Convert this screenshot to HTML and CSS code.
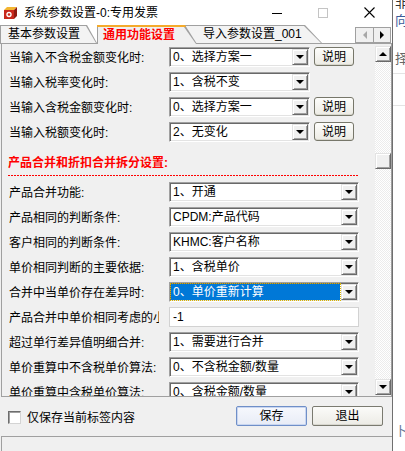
FILE: index.html
```html
<!DOCTYPE html>
<html lang="zh-CN">
<head>
    <meta charset="UTF-8">
    <meta name="viewport" content="width=device-width, initial-scale=1.0">
    <title>系统参数设置</title>
    <link rel="stylesheet" href="styles.css">
</head>
<body>
    <div class="screen">
        <div class="window">
            <div class="titlebar">
                <svg class="app-icon" width="15" height="15" viewBox="0 0 15 15">
                    <path d="M1 5 L11 5 L11 14 L1 14 Z" fill="#c8281c"/>
                    <path d="M1 5 L4 2 L14 2 L11 5 Z" fill="#f3b531"/>
                    <path d="M11 5 L14 2 L14 11 L11 14 Z" fill="#8e1a12"/>
                    <circle cx="6" cy="9.5" r="2.7" fill="#fff"/>
                    <circle cx="6" cy="9.5" r="1.3" fill="#c8281c"/>
                </svg>
                <span class="title">系统参数设置-0:专用发票</span>
                <div class="caption-buttons">
                    <span class="cap">
                        <svg width="10" height="10" viewBox="0 0 10 10"><path d="M0 5.5 H10" stroke="#000" stroke-width="1"/></svg>
                    </span>
                    <span class="cap">
                        <svg width="10" height="10" viewBox="0 0 10 10"><rect x="0.5" y="0.5" width="9" height="9" fill="none" stroke="#c4c4c4"/></svg>
                    </span>
                    <span class="cap">
                        <svg width="11" height="11" viewBox="0 0 11 11"><path d="M0.5 0.5 L10.5 10.5 M10.5 0.5 L0.5 10.5" stroke="#000" stroke-width="1.1"/></svg>
                    </span>
                </div>
            </div>

            <div class="tabstrip">
                <div class="tab tab-first">基本参数设置</div>
                <div class="tab tab-active">通用功能设置</div>
                <div class="tab tab-last">导入参数设置_001</div>
                <div class="tab-scroll">
                    <span class="ts-btn"><i class="arrow-left"></i></span>
                    <span class="ts-btn"><i class="arrow-right"></i></span>
                </div>
            </div>

            <div class="panel">
                <div class="form">
                    <div class="row">
                        <span class="label">当输入不含税金额变化时:</span>
                        <div class="combo combo-short"><span class="combo-value">0、选择方案一</span><span class="combo-btn"></span></div>
                        <button class="btn-help">说明</button>
                    </div>
                    <div class="row">
                        <span class="label">当输入税率变化时:</span>
                        <div class="combo combo-short"><span class="combo-value">1、含税不变</span><span class="combo-btn"></span></div>
                    </div>
                    <div class="row">
                        <span class="label">当输入含税金额变化时:</span>
                        <div class="combo combo-short"><span class="combo-value">0、选择方案一</span><span class="combo-btn"></span></div>
                        <button class="btn-help">说明</button>
                    </div>
                    <div class="row">
                        <span class="label">当输入税额变化时:</span>
                        <div class="combo combo-short"><span class="combo-value">2、无变化</span><span class="combo-btn"></span></div>
                        <button class="btn-help">说明</button>
                    </div>

                    <div class="section-title">产品合并和折扣合并拆分设置:</div>
                    <div class="dashline"></div>

                    <div class="row">
                        <span class="label">产品合并功能:</span>
                        <div class="combo combo-wide"><span class="combo-value">1、开通</span><span class="combo-btn"></span></div>
                    </div>
                    <div class="row">
                        <span class="label">产品相同的判断条件:</span>
                        <div class="combo combo-wide"><span class="combo-value">CPDM:产品代码</span><span class="combo-btn"></span></div>
                    </div>
                    <div class="row">
                        <span class="label">客户相同的判断条件:</span>
                        <div class="combo combo-wide"><span class="combo-value">KHMC:客户名称</span><span class="combo-btn"></span></div>
                    </div>
                    <div class="row">
                        <span class="label">单价相同判断的主要依据:</span>
                        <div class="combo combo-wide"><span class="combo-value">1、含税单价</span><span class="combo-btn"></span></div>
                    </div>
                    <div class="row">
                        <span class="label">合并中当单价存在差异时:</span>
                        <div class="combo combo-wide"><span class="combo-value selected">0、单价重新计算</span><span class="combo-btn"></span></div>
                    </div>
                    <div class="row">
                        <span class="label">产品合并中单价相同考虑的小数位数:</span>
                        <div class="edit">-1</div>
                    </div>
                    <div class="row">
                        <span class="label">超过单行差异值明细合并:</span>
                        <div class="combo combo-wide"><span class="combo-value">1、需要进行合并</span><span class="combo-btn"></span></div>
                    </div>
                    <div class="row">
                        <span class="label">单价重算中不含税单价算法:</span>
                        <div class="combo combo-wide"><span class="combo-value">0、不含税金额/数量</span><span class="combo-btn"></span></div>
                    </div>
                    <div class="row">
                        <span class="label">单价重算中含税单价算法:</span>
                        <div class="combo combo-wide"><span class="combo-value">0、含税金额/数量</span><span class="combo-btn"></span></div>
                    </div>
                </div>

                <div class="vscroll">
                    <span class="sb-btn"><i class="arrow-up"></i></span>
                    <span class="sb-thumb"></span>
                    <span class="sb-space"></span>
                    <span class="sb-btn"><i class="arrow-down"></i></span>
                </div>
            </div>

            <div class="footer">
                <span class="checkbox"></span>
                <span class="check-label">仅保存当前标签内容</span>
                <div class="actions">
                    <button class="btn btn-default">保存</button>
                    <button class="btn">退出</button>
                </div>
            </div>
            <div class="statusbar"></div>
        </div>

        <!-- window behind, only its left edge shows -->
        <div class="backdrop">
            <span class="bd-char bd-top">非</span>
            <span class="bd-char bd-blue">向</span>
            <span class="bd-char bd-mid">择</span>
            <span class="bd-line"></span>
            <span class="bd-line bd-line2"></span>
            <span class="bd-char bd-bottom">卜</span>
        </div>
    </div>
</body>
</html>
```

FILE: styles.css
```css
* {
    box-sizing: border-box;
}
body {
    margin: 0;
    font-family: "Liberation Sans", "Noto Sans CJK SC", sans-serif;
    font-size: 12px;
    color: #000;
    background-color: #fff;
}
button {
    font-family: inherit;
    font-size: 12px;
    color: #000;
    padding: 0;
}
.screen {
    display: flex;
    width: 405px;
    height: 451px;
    overflow: hidden;
}
.window {
    width: 393px;
    height: 451px;
    display: flex;
    flex-direction: column;
    background-color: #f0f0f0;
    border-right: 1px solid #6f6f6f;
}

/* title bar */
.titlebar {
    height: 25px;
    display: flex;
    align-items: center;
    background-color: #fff;
}
.app-icon {
    margin-left: 3px;
    flex-shrink: 0;
}
.title {
    margin-left: 6px;
    line-height: 14px;
}
.caption-buttons {
    margin-left: auto;
    display: flex;
}
.cap {
    width: 46px;
    height: 25px;
    display: flex;
    align-items: center;
    justify-content: center;
}

/* tabs */
.tabstrip {
    height: 19px;
    display: flex;
    align-items: flex-end;
    background-color: #fff;
    border-bottom: 1px solid #a0a0a0;
}
.tab {
    --slant: 10px;
    position: relative;
    z-index: 1;
    height: 18px;
    display: flex;
    align-items: center;
    line-height: 14px;
    white-space: nowrap;
}
.tab::before,
.tab::after {
    content: "";
    position: absolute;
    z-index: -1;
    clip-path: polygon(0 0, calc(100% - var(--slant)) 0, 100% 100%, 0 100%);
}
.tab::before {
    inset: 0;
    background-color: #a0a0a0;
}
.tab::after {
    inset: 1px 1px 0 1px;
    background-color: #f3f3f3;
}
.tab-first {
    width: 97px;
    padding-left: 8px;
    z-index: 2;
}
.tab-active {
    --slant: 12px;
    width: 100px;
    height: 19px;
    margin-bottom: -1px;
    padding-left: 6px;
    padding-top: 1px;
    z-index: 3;
    color: #ff0000;
    font-weight: bold;
}
.tab-active::before {
    background: linear-gradient(#f4aa2c 0 2px, #a0a0a0 2px);
}
.tab-active::after {
    inset: 2px 1px 0 1px;
    background-color: #f0f0f0;
}
.tab-last {
    --slant: 17px;
    width: 137px;
    margin-left: -12px;
    padding-left: 18px;
}
.tab-scroll {
    margin-left: auto;
    margin-right: 1px;
    align-self: flex-start;
    margin-top: 2px;
    height: 16px;
    display: flex;
    border: 1px solid #a0a0a0;
    background-color: #f0f0f0;
}
.ts-btn {
    width: 17px;
    display: flex;
    align-items: center;
    justify-content: center;
}
.ts-btn + .ts-btn {
    border-left: 1px solid #a0a0a0;
}
.arrow-left {
    border-top: 4px solid transparent;
    border-bottom: 4px solid transparent;
    border-right: 4px solid #a8a8a8;
}
.arrow-right {
    border-top: 4px solid transparent;
    border-bottom: 4px solid transparent;
    border-left: 4px solid #000;
}

/* panel */
.panel {
    height: 353px;
    margin-left: 1px;
    display: flex;
    border-left: 1px solid #a0a0a0;
    border-right: 1px solid #a0a0a0;
    border-bottom: 1px solid #a0a0a0;
}
.form {
    flex: 1;
    overflow: hidden;
}
.row {
    height: 25px;
    display: flex;
    align-items: center;
}
.label {
    width: 150px;
    margin-left: 7px;
    margin-right: 10px;
    padding-top: 2px;
    line-height: 14px;
    white-space: nowrap;
    overflow: hidden;
    flex-shrink: 0;
}
.combo {
    height: 20px;
    display: flex;
    padding: 1px;
    background-color: #fff;
    border: 1px solid;
    border-color: #a0a0a0 #fff #fff #a0a0a0;
    box-shadow: inset 1px 1px 0 #696969, inset -1px -1px 0 #e3e3e3;
}
.combo-short {
    width: 141px;
}
.combo-wide {
    width: 190px;
}
.combo-value {
    flex: 1;
    padding-left: 2px;
    line-height: 16px;
    white-space: nowrap;
    overflow: hidden;
}
.combo-value.selected {
    margin: 0 1px 0 0;
    background-color: #0078d7;
    color: #fff;
    outline: 1px dotted #d8b400;
}
.combo-btn {
    width: 16px;
    display: flex;
    align-items: center;
    justify-content: center;
    background-color: #f0f0f0;
    border: 1px solid;
    border-color: #e3e3e3 #696969 #696969 #e3e3e3;
    box-shadow: inset 1px 1px 0 #fff, inset -1px -1px 0 #a0a0a0;
}
.combo-btn::after {
    content: "";
    border-left: 4px solid transparent;
    border-right: 4px solid transparent;
    border-top: 4px solid #000;
    margin-top: 1px;
}
.btn-help {
    width: 40px;
    height: 19px;
    margin-left: 4px;
    border: 1px solid #77776a;
    border-radius: 3px;
    background: linear-gradient(#fdfdfb, #ecebe4);
    box-shadow: inset 0 -1px 0 #d8d7cd;
    line-height: 16px;
}
.edit {
    width: 190px;
    height: 20px;
    padding-left: 3px;
    line-height: 18px;
    background-color: #fff;
    border: 1px solid #d2d2d2;
}
.section-title {
    margin-left: 6px;
    padding: 12px 0 5px;
    line-height: 14px;
    color: #ff0000;
    font-weight: bold;
}
.dashline {
    width: 350px;
    height: 1px;
    margin: 0 0 3px 6px;
    background: repeating-linear-gradient(90deg, #ff0000 0 2px, transparent 2px 3px);
}

/* scrollbar */
.vscroll {
    width: 16px;
    margin: 2px 0 1px;
    display: flex;
    flex-direction: column;
    background-color: #fff;
    background-image: repeating-conic-gradient(#ececec 0 25%, #fff 0 50%);
    background-size: 2px 2px;
}
.sb-btn,
.sb-thumb {
    height: 16px;
    display: flex;
    align-items: center;
    justify-content: center;
    background-color: #f0f0f0;
    border: 1px solid;
    border-color: #e3e3e3 #696969 #696969 #e3e3e3;
    box-shadow: inset 1px 1px 0 #fff, inset -1px -1px 0 #a0a0a0;
}
.sb-thumb {
    margin-top: 91px;
}
.sb-space {
    flex: 1;
}
.arrow-up {
    border-left: 4px solid transparent;
    border-right: 4px solid transparent;
    border-bottom: 4px solid #000;
}
.arrow-down {
    border-left: 4px solid transparent;
    border-right: 4px solid transparent;
    border-top: 4px solid #000;
}

/* footer */
.footer {
    height: 39px;
    margin-left: 1px;
    display: flex;
    align-items: center;
    padding: 2px 9px 0 7px;
}
.checkbox {
    width: 13px;
    height: 13px;
    background-color: #fff;
    border: 1px solid;
    border-color: #6d6d6d #d4d4d4 #d4d4d4 #6d6d6d;
    box-shadow: inset 1px 1px 0 #a0a0a0;
}
.check-label {
    margin-left: 6px;
    line-height: 14px;
}
.actions {
    margin-left: auto;
    margin-top: -3px;
    display: flex;
    gap: 5px;
}
.btn {
    width: 71px;
    height: 20px;
    border: 1px solid #7a7a70;
    border-radius: 2px;
    background: linear-gradient(#fbfbf9, #ecebe5);
    box-shadow: inset 0 -1px 0 #d8d7cf;
    line-height: 17px;
}
.btn-default {
    border-color: #6f8fc8;
    background: linear-gradient(#f6f8fd, #e8ecf6);
    box-shadow: inset 0 0 0 1px #c9d6f0;
}
.statusbar {
    flex: 1;
    margin-left: 1px;
    border-top: 1px solid #a0a0a0;
    border-left: 1px solid #a0a0a0;
}

/* window behind */
.backdrop {
    width: 12px;
    display: flex;
    flex-direction: column;
    overflow: hidden;
    background-color: #fff;
}
.bd-char {
    display: block;
    margin-left: 2px;
    font-size: 13px;
    line-height: 13px;
    color: #333;
    white-space: nowrap;
}
.bd-top {
    margin-top: -4px;
}
.bd-blue {
    margin-top: 5px;
    color: #3a5a9a;
}
.bd-mid {
    margin-top: 25px;
    color: #666;
}
.bd-line {
    height: 1px;
    margin-top: 8px;
    background-color: #e4e4e4;
}
.bd-line2 {
    margin-top: 31px;
}
.bd-bottom {
    margin-top: 318px;
    color: #6a7a9a;
}
```
